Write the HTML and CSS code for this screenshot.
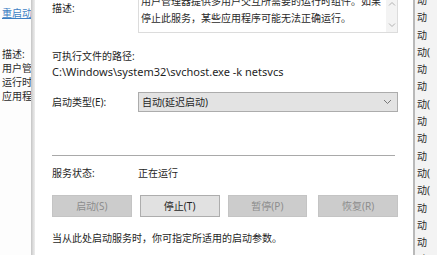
FILE: index.html
```html
<!DOCTYPE html>
<html lang="zh-CN">
<head>
<meta charset="utf-8">
<link rel="stylesheet" href="styles.css">
</head>
<body>
<div class="screen">
  <aside class="left">
    <a class="link">重启动</a>
    <div class="left-desc">
      <div>描述:</div>
      <div>用户管</div>
      <div>运行时</div>
      <div>应用程</div>
    </div>
  </aside>
  <div class="edge"></div>
  <main class="dialog">
    <div class="row desc-row">
      <div class="label desc-label">描述:</div>
      <div class="desc-box">
        <div class="desc-text">用户管理器提供多用户交互所需要的运行时组件。如果停止此服务，某些应用程序可能无法正确运行。</div>
        <div class="scroll">
          <svg class="arrow" width="8" height="5" viewBox="0 0 8 5"><path d="M1 4.5 L4 1.5 L7 4.5" fill="none" stroke="#b0b0b0" stroke-width="1"/></svg>
          <svg class="arrow" width="8" height="5" viewBox="0 0 8 5"><path d="M1 0.5 L4 3.5 L7 0.5" fill="none" stroke="#b0b0b0" stroke-width="1"/></svg>
        </div>
      </div>
    </div>
    <div class="path-label">可执行文件的路径:</div>
    <div class="path">C:\Windows\system32\svchost.exe -k netsvcs</div>
    <div class="row type-row">
      <div class="label">启动类型(E):</div>
      <div class="select">
        <span>自动(延迟启动)</span>
        <svg width="9" height="6" viewBox="0 0 9 6"><path d="M1 1 L4.5 4.5 L8 1" fill="none" stroke="#777" stroke-width="1"/></svg>
      </div>
    </div>
    <div class="divider"></div>
    <div class="row status-row">
      <div class="label">服务状态:</div>
      <div class="status">正在运行</div>
    </div>
    <div class="buttons">
      <button class="btn disabled">启动(S)</button>
      <button class="btn">停止(T)</button>
      <button class="btn disabled">暂停(P)</button>
      <button class="btn disabled">恢复(R)</button>
    </div>
    <div class="hint">当从此处启动服务时，你可指定所适用的启动参数。</div>
  </main>
  <aside class="right">
    <div>动</div>
    <div>动</div>
    <div>动</div>
    <div>动(</div>
    <div>动</div>
    <div>动</div>
    <div>动(</div>
    <div>动</div>
    <div>动</div>
    <div>动</div>
    <div>动(</div>
    <div>动(</div>
    <div>动</div>
    <div>动</div>
    <div>动</div>
    <div>动</div>
  </aside>
</div>
</body>
</html>
```

FILE: styles.css
```css
* { box-sizing: border-box; }
html, body { margin: 0; padding: 0; background: #ffffff; }
body {
  font-family: "Noto Sans", "Noto Sans CJK SC", sans-serif;
  font-size: 10px;
  color: #1f1f1f;
}
.screen {
  display: flex;
  width: 437px;
  height: 255px;
  overflow: hidden;
}
.left {
  width: 31px;
  flex: none;
  padding-left: 2px;
  padding-top: 6px;
  overflow: hidden;
  white-space: nowrap;
  line-height: 14px;
  color: #2b2b2b;
  background: #fdfdfd;
}
.link {
  display: block;
  color: #3c7fc4;
  text-decoration: underline;
}
.left-desc { margin-top: 27px; }
.edge {
  width: 4px;
  flex: none;
  background: linear-gradient(to right, #c4c4c4, #dcdcdc 50%, #ededed);
}
.dialog {
  width: 378px;
  flex: none;
  padding-left: 17px;
  background: #ffffff;
  line-height: 16px;
}
.row {
  display: grid;
  grid-template-columns: 86px 260px;
  align-items: center;
}
.desc-row {
  align-items: start;
  margin-top: -10px;
}
.desc-label { margin-top: 10px; line-height: 17px; }
.desc-box {
  height: 43px;
  border: 1px solid #dcdcdc;
  border-top: none;
  display: flex;
  color: #2a2a2a;
}
.desc-text {
  width: 247px;
  padding: 3px 0 0 2px;
  line-height: 17px;
}
.scroll {
  width: 11px;
  margin-left: auto;
  background: #f3f3f3;
  display: flex;
  flex-direction: column;
  align-items: center;
  justify-content: space-between;
  padding: 11px 0 4px;
}
.path-label { margin-top: 15px; }
.path { font-size: 11px; }
.type-row { margin-top: 12px; }
.select {
  height: 20px;
  background: #e3e3e3;
  border: 1px solid #acacac;
  display: flex;
  align-items: center;
  justify-content: space-between;
  padding: 0 5px 0 3px;
}
.divider {
  width: 343px;
  height: 1px;
  background: #a9a9a9;
  margin-top: 43px;
}
.status-row { margin-top: 9px; }
.buttons {
  display: flex;
  gap: 8px;
  margin-top: 14px;
  width: 346px;
}
.btn {
  width: 80px;
  height: 22px;
  padding: 0;
  font: inherit;
  color: #1f1f1f;
  background: #e1e1e1;
  border: 1px solid #adadad;
}
.btn.disabled {
  background: #cccccc;
  border-color: #c4c4c4;
  color: #8c8c8c;
}
.btn:nth-child(4) { margin-left: 3px; }
.hint { margin-top: 13px; }
.right {
  flex: 1;
  border-left: 2px solid #b9b9b9;
  background: #f3f3f3;
  padding-left: 2px;
  margin-top: -8px;
  line-height: 17.3px;
  white-space: nowrap;
  overflow: hidden;
  color: #2a2a2a;
}
```
